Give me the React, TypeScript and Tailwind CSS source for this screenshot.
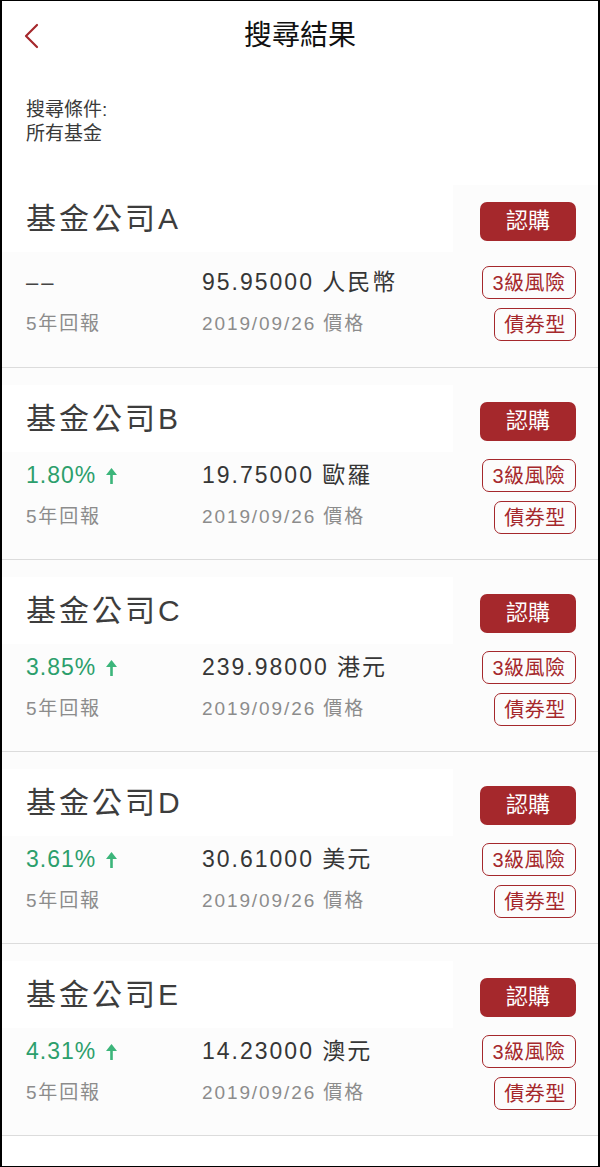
import React from "react";

interface Fund {
  name: string;
  ret: string | null;
  price: string;
}

const funds: Fund[] = [
  { name: "基金公司A", ret: null, price: "95.95000 人民幣" },
  { name: "基金公司B", ret: "1.80%", price: "19.75000 歐羅" },
  { name: "基金公司C", ret: "3.85%", price: "239.98000 港元" },
  { name: "基金公司D", ret: "3.61%", price: "30.61000 美元" },
  { name: "基金公司E", ret: "4.31%", price: "14.23000 澳元" },
];

const UpArrow = () => (
  <svg width="11" height="16" viewBox="0 0 11 16" className="ml-[10px]">
    <polygon points="5.5,0 11,7 0,7" fill="#3cb57a" />
    <rect x="4.2" y="6" width="2.6" height="10" fill="#3cb57a" />
  </svg>
);

const FundCard: React.FC<{ fund: Fund; first: boolean }> = ({ fund, first }) => {
  return (
    <div
      className={
        first
          ? "bg-[#fcfcfc] pb-[26px]"
          : "bg-[#fcfcfc] border-t border-[#dcdcdc] pt-[17px] pb-[25px]"
      }
    >
      <div className="flex items-center justify-between h-[67px]">
        <div className="bg-white h-full w-[451px] flex items-center pl-[24px]">
          <span className="text-[30px] tracking-[3px] text-[#3d3d3d] leading-none">
            {fund.name}
          </span>
        </div>
        <button className="mt-[5px] mr-[22px] w-[96px] h-[39px] rounded-[7px] bg-[#a5282c] text-white text-[22px] leading-none">
          認購
        </button>
      </div>
      <div
        className={
          first
            ? "flex items-center h-[33px] mt-[14px] pl-[24px] pr-[22px]"
            : "flex items-center h-[33px] mt-[7px] pl-[24px] pr-[22px]"
        }
      >
        <div className="w-[176px] flex items-center">
          {fund.ret ? (
            <>
              <span className="text-[23px] tracking-[1px] text-[#2c9f6c]">
                {fund.ret}
              </span>
              <UpArrow />
            </>
          ) : (
            <span className="text-[22px] tracking-[3px] text-[#444]">––</span>
          )}
        </div>
        <span className="flex-1 text-[23px] tracking-[2px] text-[#363636]">
          {fund.price}
        </span>
        <span className="w-[94px] h-[33px] flex items-center justify-center rounded-[7px] border-[1.5px] border-[#a5282c] text-[#a5282c] text-[20px] tracking-[0.5px] leading-none">
          3級風險
        </span>
      </div>
      <div className="flex items-center h-[33px] mt-[9px] pl-[24px] pr-[22px]">
        <span className="w-[176px] text-[19px] tracking-[1.8px] text-[#8c8c8c]">
          5年回報
        </span>
        <span className="flex-1 text-[19px] tracking-[1.9px] text-[#8c8c8c]">
          2019/09/26 價格
        </span>
        <span className="w-[82px] h-[33px] flex items-center justify-center rounded-[7px] border-[1.5px] border-[#a5282c] text-[#a5282c] text-[20px] tracking-[0.5px] leading-none">
          債券型
        </span>
      </div>
    </div>
  );
};

export default function App() {
  return (
    <div className="w-[600px] h-[1167px] bg-white border-l-2 border-r-2 border-t border-b border-black overflow-hidden font-['Liberation_Sans','Noto_Sans_CJK_TC',sans-serif]">
      <div className="grid grid-cols-[60px_1fr_60px] items-center h-[69px]">
        <div className="pl-[22px] flex items-center">
          <svg width="16" height="26" viewBox="0 0 16 26">
            <polyline
              points="13,2 2,13 13,24"
              fill="none"
              stroke="#a5282c"
              strokeWidth="2.2"
              strokeLinecap="round"
              strokeLinejoin="round"
            />
          </svg>
        </div>
        <h1 className="text-center text-[28px] text-[#111] leading-none">搜尋結果</h1>
        <div />
      </div>
      <div className="mt-[28px] pl-[24px] text-[19px] leading-[23.5px] text-[#3a3a3a]">
        <div>搜尋條件:</div>
        <div>所有基金</div>
      </div>
      <div className="mt-[40px] border-b border-[#dcdcdc]">
        {funds.map((fund, i) => (
          <FundCard key={i} fund={fund} first={i === 0} />
        ))}
      </div>
    </div>
  );
}
